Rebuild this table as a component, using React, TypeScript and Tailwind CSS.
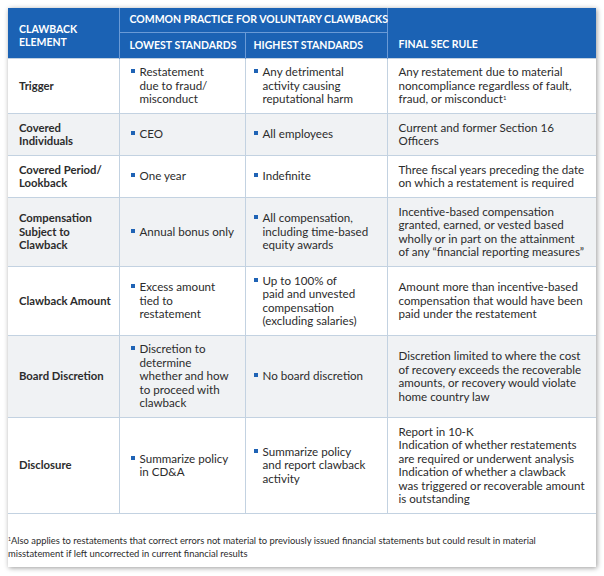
import React from "react";

type Row = {
  label: string[];
  low: string[];
  high: string[];
  rule: React.ReactNode;
  h: string;
  shade: boolean;
};

const rows: Row[] = [
  {
    label: ["Trigger"],
    low: ["Restatement", "due to fraud/", "misconduct"],
    high: ["Any detrimental", "activity causing", "reputational harm"],
    rule: (
      <>
        Any restatement due to material
        <br />
        noncompliance regardless of fault,
        <br />
        fraud, or misconduct
        <sup className="text-[6px] leading-none">1</sup>
      </>
    ),
    h: "h-[55px]",
    shade: false,
  },
  {
    label: ["Covered", "Individuals"],
    low: ["CEO"],
    high: ["All employees"],
    rule: (
      <>
        Current and former Section 16
        <br />
        Officers
      </>
    ),
    h: "h-[42px]",
    shade: true,
  },
  {
    label: ["Covered Period/", "Lookback"],
    low: ["One year"],
    high: ["Indefinite"],
    rule: (
      <>
        Three fiscal years preceding the date
        <br />
        on which a restatement is required
      </>
    ),
    h: "h-[42px]",
    shade: false,
  },
  {
    label: ["Compensation", "Subject to", "Clawback"],
    low: ["Annual bonus only"],
    high: ["All compensation,", "including time-based", "equity awards"],
    rule: (
      <>
        Incentive-based compensation
        <br />
        granted, earned, or vested based
        <br />
        wholly or in part on the attainment
        <br />
        of any {"\u201cfinancial reporting measures\u201d"}
      </>
    ),
    h: "h-[69px]",
    shade: true,
  },
  {
    label: ["Clawback Amount"],
    low: ["Excess amount", "tied to", "restatement"],
    high: ["Up to 100% of", "paid and unvested", "compensation", "(excluding salaries)"],
    rule: (
      <>
        Amount more than incentive-based
        <br />
        compensation that would have been
        <br />
        paid under the restatement
      </>
    ),
    h: "h-[69px]",
    shade: false,
  },
  {
    label: ["Board Discretion"],
    low: ["Discretion to", "determine", "whether and how", "to proceed with", "clawback"],
    high: ["No board discretion"],
    rule: (
      <>
        Discretion limited to where the cost
        <br />
        of recovery exceeds the recoverable
        <br />
        amounts, or recovery would violate
        <br />
        home country law
      </>
    ),
    h: "h-[82px]",
    shade: true,
  },
  {
    label: ["Disclosure"],
    low: ["Summarize policy", "in CD&A"],
    high: ["Summarize policy", "and report clawback", "activity"],
    rule: (
      <>
        Report in 10-K
        <br />
        Indication of whether restatements
        <br />
        are required or underwent analysis
        <br />
        Indication of whether a clawback
        <br />
        was triggered or recoverable amount
        <br />
        is outstanding
      </>
    ),
    h: "h-[96px]",
    shade: false,
  },
];

function Lines({ lines }: { lines: string[] }) {
  return (
    <>
      {lines.map((l, i) => (
        <div key={i}>{l}</div>
      ))}
    </>
  );
}

function Bullet({ lines }: { lines: string[] }) {
  return (
    <div className="flex items-start gap-[5px] whitespace-nowrap">
      <span className="mt-[4px] h-[4px] w-[4px] shrink-0 bg-[#1f63b5]" />
      <div>
        <Lines lines={lines} />
      </div>
    </div>
  );
}

export default function App() {
  return (
    <div className="min-h-screen bg-white p-[8px] font-['Lato',sans-serif] text-[11.6px] leading-[13.5px] text-[#2c2c2c]">
      <div className="w-[588px] bg-white shadow-[1px_1px_5px_rgba(0,0,0,0.4)]">
        <table className="w-full table-fixed border-collapse">
          <colgroup>
            <col className="w-[111px]" />
            <col className="w-[126px]" />
            <col className="w-[142px]" />
            <col className="w-[209px]" />
          </colgroup>
          <thead className="bg-[#1b62b4] text-left text-[10.5px] font-bold leading-[13px] text-white">
            <tr className="h-[24px]">
              <th rowSpan={2} className="border-r border-[#6a9ad6] px-[11px] pt-[6px] align-middle">
                CLAWBACK
                <br />
                ELEMENT
              </th>
              <th colSpan={2} className="whitespace-nowrap border-b border-r border-[#6a9ad6] px-[10px] align-middle">
                COMMON PRACTICE FOR VOLUNTARY CLAWBACKS
              </th>
              <th rowSpan={2} className="px-[11px] pb-[7px] align-bottom">
                FINAL SEC RULE
              </th>
            </tr>
            <tr className="h-[26px]">
              <th className="whitespace-nowrap border-r border-[#6a9ad6] px-[10px] align-middle">LOWEST STANDARDS</th>
              <th className="whitespace-nowrap border-r border-[#6a9ad6] px-[8px] align-middle">HIGHEST STANDARDS</th>
            </tr>
          </thead>
          <tbody>
            {rows.map((r) => (
              <tr key={r.label.join(" ")} className={`${r.h} ${r.shade ? "bg-[#f0f2f4]" : "bg-white"}`}>
                <td className="whitespace-nowrap border border-l-0 border-[#c3d2e1] pl-[11px] align-middle text-[11.3px] font-bold">
                  <Lines lines={r.label} />
                </td>
                <td className="border border-[#c3d2e1] px-[11px] align-middle">
                  <Bullet lines={r.low} />
                </td>
                <td className="border border-[#c3d2e1] px-[8px] align-middle">
                  <Bullet lines={r.high} />
                </td>
                <td className="whitespace-nowrap border border-r-0 border-[#c3d2e1] px-[11px] align-middle">
                  {r.rule}
                </td>
              </tr>
            ))}
          </tbody>
        </table>
        <div className="flex h-[53px] items-end pb-[7px] text-[9.4px] leading-[13px]">
          <p className="whitespace-nowrap">
            <sup className="text-[5px] leading-none">1</sup>Also applies to restatements that correct errors not material
            to previously issued financial statements but could result in material
            <br />
            misstatement if left uncorrected in current financial results
          </p>
        </div>
      </div>
    </div>
  );
}
